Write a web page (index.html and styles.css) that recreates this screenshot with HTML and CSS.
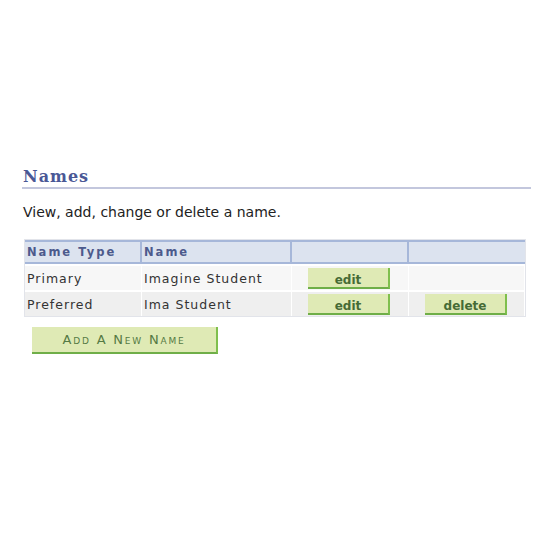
FILE: index.html
```html
<!DOCTYPE html>
<html>
<head>
<meta charset="utf-8">
<link rel="stylesheet" href="styles.css">
</head>
<body>
<div class="page">
  <h1 class="title">Names</h1>
  <p class="desc">View, add, change or delete a name.</p>
  <table class="grid">
    <thead>
      <tr>
        <th class="c1">Name Type</th>
        <th class="c2">Name</th>
        <th class="c3"></th>
        <th class="c4"></th>
      </tr>
    </thead>
    <tbody>
      <tr class="odd">
        <td>Primary</td>
        <td>Imagine Student</td>
        <td class="act"><button class="btn">edit</button></td>
        <td class="act"></td>
      </tr>
      <tr class="even">
        <td>Preferred</td>
        <td>Ima Student</td>
        <td class="act"><button class="btn">edit</button></td>
        <td class="act"><button class="btn">delete</button></td>
      </tr>
    </tbody>
  </table>
  <button class="add">Add A New Name</button>
</div>
</body>
</html>
```

FILE: styles.css
```css
html, body { margin: 0; padding: 0; background: #fff; }
.page {
  padding: 167px 19px 0 22px;
  font-family: "DejaVu Sans", Verdana, sans-serif;
}
.title {
  margin: 0;
  font-family: "DejaVu Serif", Georgia, serif;
  font-weight: bold;
  font-size: 16px;
  letter-spacing: 1px;
  color: #4a5896;
  line-height: 20px;
  padding: 0 0 0 1px;
  border-bottom: 2px solid #c3c7dd;
}
.desc {
  margin: 15px 0 0 1px;
  font-size: 14px;
  line-height: 16px;
  color: #222;
}
.grid {
  margin: 19px 0 0 2px;
  width: 502px;
  border-collapse: separate;
  border-spacing: 0;
  border: 1px solid #e2e4ea;
  table-layout: fixed;
}
.grid th {
  background: #dce3ef;
  border-top: 2px solid #a6b7d9;
  border-bottom: 2px solid #a6b7d9;
  border-right: 2px solid #a6b7d9;
  height: 20px;
  padding: 0 0 0 2px;
  text-align: left;
  font-size: 11.5px;
  font-weight: bold;
  letter-spacing: 2px;
  color: #4c5a8c;
}
.grid th.c4 { border-right: none; }
.grid .c1 { width: 113px; }
.grid .c2 { width: 146px; }
.grid .c3 { width: 113px; }
.grid td {
  height: 24px;
  padding: 0 0 0 2px;
  font-size: 12.5px;
  letter-spacing: 1px;
  color: #333;
  border-right: 1px solid #fff;
  border-top: 2px solid #fff;
}
.grid tr.odd td { background: #f7f7f7; }
.grid tr.even td { background: #efefef; }
.grid td.act { padding-left: 16px; }
.btn {
  display: block;
  width: 82px;
  height: 21px;
  margin: 0;
  padding: 5px 0 0;
  background: #dfeab5;
  border: none;
  border-right: 2px solid #7fbf4d;
  border-bottom: 2px solid #6fae48;
  font-family: "DejaVu Sans", Verdana, sans-serif;
  font-size: 12px;
  font-weight: bold;
  line-height: 14px;
  color: #466b36;
  text-align: center;
}
.add {
  display: block;
  margin: 10px 0 0 10px;
  width: 186px;
  height: 27px;
  padding: 0;
  background: #dfeab5;
  border: none;
  border-right: 2px solid #7fbf4d;
  border-bottom: 2px solid #6fae48;
  font-family: "DejaVu Sans", Verdana, sans-serif;
  font-size: 13px;
  font-variant: small-caps;
  letter-spacing: 1.8px;
  color: #557a44;
  text-align: center;
}
```
